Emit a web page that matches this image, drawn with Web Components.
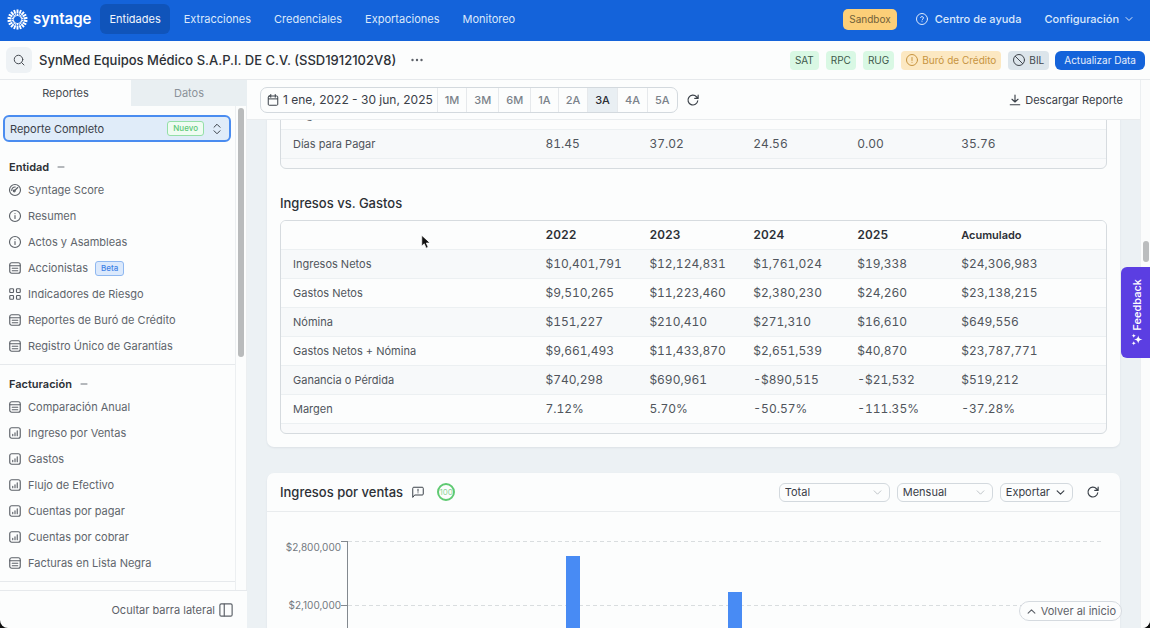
<!DOCTYPE html>
<html lang="es">
<head>
<meta charset="utf-8">
<meta name="viewport" content="width=device-width, initial-scale=1">
<title>Syntage – SynMed Equipos Médico</title>
<style>
  html, body { height: 100%; margin: 0; }
  body { background: #111; color: #464b52; font-family: Inter, "Liberation Sans", sans-serif; font-size: 11px; line-height: 16px; overflow: hidden; }
</style>
</head>
<body>
<syn-app>
  <syn-topbar slot="top"></syn-topbar>
  <syn-entity-bar slot="entity" name="SynMed Equipos Médico S.A.P.I. DE C.V. (SSD1912102V8)"></syn-entity-bar>
  <syn-sidebar slot="side">
    <syn-nav-group heading="Entidad">
      <syn-nav-item icon="gauge">Syntage Score</syn-nav-item>
      <syn-nav-item icon="info">Resumen</syn-nav-item>
      <syn-nav-item icon="info">Actos y Asambleas</syn-nav-item>
      <syn-nav-item icon="list">Accionistas<syn-tag slot="tag" tone="beta">Beta</syn-tag></syn-nav-item>
      <syn-nav-item icon="grid">Indicadores de Riesgo</syn-nav-item>
      <syn-nav-item icon="list">Reportes de Buró de Crédito</syn-nav-item>
      <syn-nav-item icon="list">Registro Único de Garantías</syn-nav-item>
    </syn-nav-group>
    <syn-nav-group heading="Facturación">
      <syn-nav-item icon="list">Comparación Anual</syn-nav-item>
      <syn-nav-item icon="chart">Ingreso por Ventas</syn-nav-item>
      <syn-nav-item icon="chart">Gastos</syn-nav-item>
      <syn-nav-item icon="chart">Flujo de Efectivo</syn-nav-item>
      <syn-nav-item icon="chart">Cuentas por pagar</syn-nav-item>
      <syn-nav-item icon="chart">Cuentas por cobrar</syn-nav-item>
      <syn-nav-item icon="list">Facturas en Lista Negra</syn-nav-item>
    </syn-nav-group>
  </syn-sidebar>
  <syn-toolbar slot="tools"></syn-toolbar>
  <syn-card>
    <div>
      <syn-table data="dias"></syn-table>
      <syn-heading>Ingresos vs. Gastos</syn-heading>
      <syn-table data="ingresos"></syn-table>
    </div>
  </syn-card>
  <syn-card flush>
    <syn-sales-header></syn-sales-header>
    <syn-sales-chart></syn-sales-chart>
  </syn-card>
</syn-app>

<script>
const base = `*,:host{box-sizing:border-box}
  button,select{font:inherit;color:inherit;margin:0;cursor:pointer}
  button{background:none;border:0;padding:0}
  a{color:inherit;text-decoration:none}`;

function define(name, css, html) {
  customElements.define(name, class extends HTMLElement {
    connectedCallback() {
      if (this.shadowRoot) return;
      const t = document.createElement('template');
      t.innerHTML = `<style>${base}${css}</style>` + (typeof html === 'function' ? html(this) : html);
      this.attachShadow({ mode: 'open' }).append(t.content.cloneNode(true));
    }
  });
}

const rays = Array.from({ length: 18 }, (_, i) => `<path d="M12 .5v4.500" transform="rotate(${i * 20} 12 12)"/><path d="M12 5.500v2.500" stroke-width="1.300" transform="rotate(${i * 20} 12 12)"/>`).join('');
const icons = {
  sun: `<g stroke-width="2.200" stroke-linecap="butt">${rays}</g>`,
  search: '<circle cx="11" cy="11" r="8.500"/><path d="m22 22-4.800-4.800"/>',
  dots: '<g fill="currentColor" stroke="none"><circle cx="3" cy="12" r="2.400"/><circle cx="12" cy="12" r="2.400"/><circle cx="21" cy="12" r="2.400"/></g>',
  help: '<circle cx="12" cy="12" r="11"/><path d="M9.1 9a3 3 0 0 1 5.8 1c0 2-2.9 2.6-2.9 4M12 17.400v.1"/>',
  down: '<path d="m3 7.500 9 9 9-9"/>',
  up: '<path d="m3 16.500 9-9 9 9"/>',
  alert: '<circle cx="12" cy="12" r="11"/><path d="M12 7v6M12 16.500v.2"/>',
  ban: '<circle cx="12" cy="12" r="11"/><path d="m4.500 4.500 15 15"/>',
  sort: '<path d="m6 8.500 6-6 6 6M6 15.500l6 6 6-6"/>',
  minus: '<path d="M3 12h18"/>',
  gauge: '<circle cx="12" cy="12" r="11"/><path d="m10.500 14 7-7M5.500 13a6.500 6.500 0 0 1 7-7"/><circle cx="10.500" cy="14" r="1.800"/>',
  info: '<circle cx="12" cy="12" r="11"/><path d="M12 11v6M12 7v.2"/>',
  list: '<rect x="1.500" y="1.500" width="21" height="21" rx="4"/><path d="M1.500 7.500h21M6.500 12.500h11M6.500 17.500h11"/>',
  grid: '<rect x="1.500" y="1.500" width="7.500" height="7.500" rx="1.500"/><rect x="15" y="1.500" width="7.500" height="7.500" rx="1.500"/><rect x="1.500" y="15" width="7.500" height="7.500" rx="1.500"/><rect x="15" y="15" width="7.500" height="7.500" rx="1.500"/>',
  chart: '<rect x="1.500" y="1.500" width="21" height="21" rx="4"/><path d="M7.500 17.500v-3M12 17.500v-6M16.500 17.500v-10"/>',
  panel: '<rect x="1.500" y="1.500" width="21" height="21" rx="2.500"/><path d="M9 2v20"/>',
  calendar: '<rect x="2.500" y="4" width="19" height="18.500" rx="2"/><path d="M3 9.800h18M7.500 1v5.500M16.500 1v5.500"/>',
  refresh: '<path d="M21.500 13.500a9.800 9.800 0 1 1-2.500-8l3 3M22.300 2v6.800H15.500"/>',
  download: '<path d="M12 2v13M6 10.500l6 5.500 6-5.500M2.500 21.500h19"/>',
  comment: '<path d="M1.500 22V4.500a2 2 0 0 1 2-2h17a2 2 0 0 1 2 2v11.500a2 2 0 0 1-2 2H6z"/><path d="M12 6.500v4M12 13.600v.2"/>',
  sparkle: '<g fill="currentColor" stroke="none"><path d="M9.500 3.500c1 6 2.500 7.500 8.500 8.500-6 1-7.500 2.500-8.500 8.500-1-6-2.500-7.500-8.500-8.500 6-1 7.500-2.500 8.500-8.500z"/><path d="M18.500 0c.5 3 1.500 4 4.500 4.500-3 .5-4 1.500-4.500 4.500-.5-3-1.500-4-4.500-4.500 3-.5 4-1.500 4.500-4.500zM18.500 15c.5 3 1.500 4 4.500 4.500-3 .5-4 1.500-4.500 4.500-.5-3-1.500-4-4.500-4.500 3-.5 4-1.500 4.500-4.500z"/></g>',
  cursor: '<path d="M3 1v18l4.300-4 3.200 7.500 3.500-1.500-3.200-7.300h6z" fill="#111" stroke="#fff" stroke-width="1.200"/>'
};
define('syn-icon', `:host{display:inline-flex;flex:none;width:12px;height:12px}svg{width:100%;height:100%;overflow:visible}`,
  el => `<svg viewBox="0 0 24 24" fill="none" stroke="currentColor" stroke-width="${el.getAttribute('weight') || 2}" stroke-linecap="round" stroke-linejoin="round" aria-hidden="true">${icons[el.getAttribute('name')]}</svg>`);

define('syn-tag', `:host{display:inline-flex;align-items:center;height:15px;padding:0 5px;border:1px solid;border-radius:3px;font-size:8px;font-weight:500;line-height:13px}
  :host([tone=beta]){color:#3f83e6;background:#dbe9fc;border-color:#8fb8f0}
  :host([tone=new]){color:#5cc878;background:#effcf2;border-color:#94dfa8}`, '<slot></slot>');

define('syn-app', `:host{display:flex;flex-direction:column;height:100vh;background:#fcfdfd;border-radius:0 0 8px 8px;overflow:hidden;position:relative}
  .body{flex:1;min-height:0;display:flex}
  .main{flex:1;min-width:0;display:flex;flex-direction:column;position:relative}
  .view{flex:1;min-height:0;overflow:hidden;background:#ecf1f4;padding:20px 20px 0}
  .stack{display:flex;flex-direction:column;gap:26px}
  .track{flex:none;width:10px;background:#fbfcfc;border-left:1px solid #eceff1;padding:161px 1px 0 2px}
  .thumb{height:21px;border-radius:3px;background:#bbbdbe}
  .top{position:absolute;right:18px;bottom:7px;height:20px;display:flex;align-items:center;gap:5px;padding:0 5px 0 7px;border:1px solid #d5dadf;border-radius:10px;background:#fcfdfd;color:#5c6168}
  .top syn-icon{width:9px;height:9px}
  .feedback{position:absolute;right:0;top:267px;width:29px;height:91px;border-radius:6px 0 0 6px;background:#5b3ee2;color:#fff;display:flex;align-items:center;justify-content:center;padding-left:3px}
  .feedback span{display:flex;align-items:center;gap:3px;writing-mode:vertical-rl;transform:rotate(180deg);font-weight:500}
  .cursor{position:absolute;left:420px;top:235px;width:14px;height:14px}`,
  `<slot name="top"></slot><slot name="entity"></slot>
  <div class="body"><slot name="side"></slot>
    <main class="main"><slot name="tools"></slot><div class="view"><div class="stack"><slot></slot></div></div>
      <button class="top"><syn-icon name="up" weight="3"></syn-icon>Volver al inicio</button></main>
    <div class="track"><div class="thumb"></div></div></div>
  <button class="feedback"><span><syn-icon name="sparkle"></syn-icon>Feedback</span></button>
  <syn-icon class="cursor" name="cursor"></syn-icon>`);

define('syn-topbar', `:host{display:flex;align-items:center;flex:none;height:41px;padding:0 17px 3px 7px;background:#1463da;color:#dbe8fb}
  .logo{display:flex;align-items:center;gap:5px;color:#fff;font-size:15px;line-height:20px;font-weight:600;margin-right:9px}
  .logo syn-icon{width:21px;height:21px}
  nav{display:flex;gap:5px;flex:1}
  nav a{padding:7px 9px;border-radius:6px}
  nav a[aria-current]{background:#1054ba;color:#f0f5fd}
  .env{padding:2px 6px;border-radius:5px;background:#fccf78;color:#70603a;font-size:10px;line-height:17px;margin-right:19px}
  .link{display:flex;align-items:center;gap:7px;font-weight:500;margin-right:23px}
  .cfg{display:flex;align-items:center;gap:6px;font-weight:500}
  .cfg syn-icon{width:8px;height:8px}`,
  `<a class="logo" href="#"><syn-icon name="sun"></syn-icon>syntage</a>
  <nav><a href="#" aria-current="page">Entidades</a><a href="#">Extracciones</a><a href="#">Credenciales</a><a href="#">Exportaciones</a><a href="#">Monitoreo</a></nav>
  <span class="env">Sandbox</span>
  <a class="link" href="#"><syn-icon name="help"></syn-icon>Centro de ayuda</a>
  <button class="cfg">Configuración<syn-icon name="down" weight="3"></syn-icon></button>`);

define('syn-entity-bar', `:host{display:flex;align-items:center;flex:none;height:39px;padding:0 5px 0 6px;border-bottom:1px solid #e6e9ec}
  .search{display:flex;align-items:center;justify-content:center;width:26px;height:26px;border-radius:6px;background:#eef2f5;margin-right:7px}
  h1{margin:0;font-size:13px;line-height:18px;font-weight:500;color:#2c3036}
  .more{display:flex;margin-left:15px;color:#5c6168}
  .src{display:flex;gap:7px;margin-left:auto;margin-right:6px;font-size:10px}
  .src span{display:flex;align-items:center;gap:4px;height:19px;padding:0 5px;border-radius:4px}
  .ok{background:#d9f8e4;color:#40594b}.warn{background:#fce8c2;color:#c79440}.off{background:#dce5eb;color:#41474e}
  .go{height:19px;padding:0 9px;border-radius:6px;background:#1463da;color:#e4eefc;font-size:10px}`,
  el => `<button class="search" aria-label="Buscar"><syn-icon name="search"></syn-icon></button>
  <h1>${el.getAttribute('name')}</h1><button class="more" aria-label="Más opciones"><syn-icon name="dots"></syn-icon></button>
  <div class="src"><span class="ok">SAT</span><span class="ok">RPC</span><span class="ok">RUG</span><span class="warn"><syn-icon name="alert"></syn-icon>Buró de Crédito</span><span class="off"><syn-icon name="ban"></syn-icon>BIL</span></div>
  <button class="go">Actualizar Data</button>`);

define('syn-sidebar', `:host{display:flex;flex-direction:column;flex:none;width:247px;min-height:0}
  .tabs{display:flex;flex:none;height:26px}
  .tabs button{flex:131;color:#464b52}.tabs button+button{flex:116;background:#e9eff2;color:#8b9299}
  .scroll{flex:1;min-height:0;display:flex}
  .list{flex:1;min-width:0;overflow:hidden}
  .picker{display:flex;align-items:center;width:calc(100% - 7px);height:27px;margin:9px 4px 12px 3px;padding:0 6px 0 5px;border:2px solid #4a8cf0;border-radius:6px;background:#e0ecf9;color:#3a4048}
  .picker syn-tag{margin-left:auto;margin-right:7px}
  .track{flex:none;width:12px;border-left:1px solid #eceff1;border-right:1px solid #eceff1;padding:2px 2px}
  .thumb{height:249px;width:6px;border-radius:3px;background:#b9bbbc}
  footer{display:flex;flex:none;height:38px;border-top:1px solid #e6e9ec;padding-right:14px;justify-content:flex-end}
  footer button{display:flex;align-items:center;gap:4px;color:#5c6168}
  footer syn-icon{width:14px;height:14px}`,
  `<div class="tabs" role="tablist"><button role="tab" aria-selected="true">Reportes</button><button role="tab" aria-selected="false">Datos</button></div>
  <div class="scroll"><nav class="list"><button class="picker">Reporte Completo<syn-tag tone="new">Nuevo</syn-tag><syn-icon name="sort"></syn-icon></button><slot></slot></nav>
  <div class="track"><div class="thumb"></div></div></div>
  <footer><button>Ocultar barra lateral<syn-icon name="panel"></syn-icon></button></footer>`);

define('syn-nav-group', `:host{display:block;padding:3px 9px 5px;border-bottom:1px solid #e6e9ec;margin-bottom:6px}
  h2{margin:0;display:flex;align-items:center;gap:8px;height:20px;font-size:11px;font-weight:600;line-height:20px;color:#2c3036}
  h2 syn-icon{width:8px;height:8px;color:#6d737a}`,
  el => `<h2>${el.getAttribute('heading')}<syn-icon name="minus" weight="3"></syn-icon></h2><slot></slot>`);

define('syn-nav-item', `:host{display:block}
  a{display:flex;align-items:center;gap:7px;height:26px;color:#60656c}
  syn-icon{color:#5c6168}`,
  el => `<a href="#"><syn-icon name="${el.getAttribute('icon')}" weight="2.300"></syn-icon><span><slot></slot></span><slot name="tag"></slot></a>`);

define('syn-toolbar', `:host{display:flex;align-items:center;flex:none;height:40px;padding:0 17px 0 13px;border-bottom:1px solid #e9ecee;background:#fcfdfd}
  .range{display:flex;height:26px;border:1px solid #d3d9de;border-radius:7px;overflow:hidden;color:#7b828a}
  .range button{padding:0 7px;border-left:1px solid #e6e9ec;font-weight:500}
  .range .date{display:flex;align-items:center;gap:4px;padding:0 4px 0 6px;border:0;color:#3a4048;font-size:12px;font-weight:400}
  .range [aria-pressed=true]{background:#e9eff3;color:#2c3036}
  .icon{display:flex;margin-left:9px;color:#3a4048}
  .dl{display:flex;align-items:center;gap:4px;margin-left:auto;color:#3a4048}`,
  () => `<div class="range"><button class="date"><syn-icon name="calendar"></syn-icon>1 ene, 2022 - 30 jun, 2025</button>${['1M', '3M', '6M', '1A', '2A', '3A', '4A', '5A'].map(p => `<button aria-pressed="${p === '3A'}">${p}</button>`).join('')}</div>
  <button class="icon" aria-label="Recargar"><syn-icon name="refresh" weight="2.300"></syn-icon></button>
  <button class="dl"><syn-icon name="download" weight="2.300"></syn-icon>Descargar Reporte</button>`);

define('syn-card', `:host{display:block;padding:13px;border-radius:7px;background:#fcfdfd;box-shadow:0 1px 2px #1c2b3a14}
  :host([flush]){padding:0}`, '<slot></slot>');

define('syn-heading', `:host{display:block;margin:24px 0 7px}h2{margin:0;font-size:13px;font-weight:500;line-height:20px;color:#2c3036}`, '<h2><slot></slot></h2>');

const tables = {
  dias: { shade: 1, rows: [['Pagos', '', '', '', '', ''], ['Días para Pagar', '81.45', '37.02', '24.56', '0.00', '35.76']] },
  ingresos: {
    shade: 0, head: ['', '2022', '2023', '2024', '2025', 'Acumulado'],
    rows: [
      ['Ingresos Netos', '$10,401,791', '$12,124,831', '$1,761,024', '$19,338', '$24,306,983'],
      ['Gastos Netos', '$9,510,265', '$11,223,460', '$2,380,230', '$24,260', '$23,138,215'],
      ['Nómina', '$151,227', '$210,410', '$271,310', '$16,610', '$649,556'],
      ['Gastos Netos + Nómina', '$9,661,493', '$11,433,870', '$2,651,539', '$40,870', '$23,787,771'],
      ['Ganancia o Pérdida', '$740,298', '$690,961', '-$890,515', '-$21,532', '$519,212'],
      ['Margen', '7.12%', '5.70%', '-50.57%', '-111.35%', '-37.28%']
    ]
  }
};
define('syn-table', `:host{display:block;border:1px solid #d6dbdf;border-radius:6px;overflow:hidden;padding-bottom:9px;background:#f9fafb}
  table{width:100%;table-layout:fixed;border-collapse:separate;border-spacing:0;background:#fcfdfd}
  col:first-child{width:30.6%}col.y{width:12.6%}
  th,td{height:29px;padding:0 12px;text-align:left;font-weight:400;border-bottom:1px solid #ecf0f2;white-space:nowrap;color:#50555c}
  thead th{color:#2c3036;font-weight:600}
  td,thead th:not(:last-child){font-size:12px;font-variant-numeric:tabular-nums}
  tr.shade>*{background:#f7f9fa}`,
  el => {
    const t = tables[el.getAttribute('data')];
    const head = t.head ? `<thead><tr>${t.head.map(h => h ? `<th scope="col">${h}</th>` : '<td></td>').join('')}</tr></thead>` : '';
    return `<table><colgroup><col>${'<col class="y">'.repeat(4)}<col></colgroup>${head}<tbody>${t.rows.map((r, i) =>
      `<tr class="${i % 2 === t.shade ? 'shade' : ''}">${r.map((c, j) => j ? `<td>${c}</td>` : `<th scope="row">${c}</th>`).join('')}</tr>`).join('')}</tbody></table>`;
  });

define('syn-sales-header', `:host{display:flex;align-items:center;height:39px;padding:0 21px 0 13px;border-bottom:1px solid #e9ecee;color:#3a4048}
  h2{margin:0;font-size:13px;font-weight:500;line-height:20px;color:#2c3036}
  .note{display:flex;margin:0 13px 0 9px}
  .score{display:flex;align-items:center;justify-content:center;width:18px;height:18px;border:2px solid #5fca72;border-radius:9px;font-size:8px;line-height:10px;color:#8fd69b}
  .tools{display:flex;align-items:center;gap:7px;margin-left:auto}
  .pick{display:grid;align-items:center}
  .pick>*{grid-area:1/1}
  .pick syn-icon{width:9px;height:9px;justify-self:end;margin-right:8px;color:#a3aab0;pointer-events:none}
  select,.export{height:19px;border:1px solid #d3d9de;border-radius:6px;background:#fcfdfd;line-height:16px}
  select{appearance:none;width:96px;padding:0 5px}
  select.wide{width:111px}
  .export{display:flex;align-items:center;gap:6px;padding:0 7px 0 5px}
  .export syn-icon{width:9px;height:9px}
  .reload{display:flex;margin-left:7px}`,
  `<h2>Ingresos por ventas</h2><button class="note" aria-label="Comentarios"><syn-icon name="comment"></syn-icon></button><span class="score">100</span>
  <div class="tools"><div class="pick"><select class="wide" aria-label="Tipo"><option>Total</option></select><syn-icon name="down" weight="1.800"></syn-icon></div>
  <div class="pick"><select aria-label="Periodo"><option>Mensual</option></select><syn-icon name="down" weight="1.800"></syn-icon></div>
  <button class="export">Exportar<syn-icon name="down" weight="3"></syn-icon></button>
  <button class="reload" aria-label="Recargar"><syn-icon name="refresh" weight="2.300"></syn-icon></button></div>`);

/* Monthly totals, in thousands, from January 2022 to June 2025 */
const months = Array(42).fill(600);
months[12] = 2645;
months[21] = 2250;
define('syn-sales-chart', `:host{display:grid;grid-template-columns:74px 6px 1fr;padding:29px 16px 20px 0;color:#737980;font-size:10px;line-height:12px}
  .labels{display:flex;flex-direction:column;gap:46px;text-align:right}
  .ticks div{height:64px;border-top:1px solid #83898f}
  .plot{display:grid;grid-template-columns:repeat(42,1fr);align-items:end;justify-items:center;height:257px;border-left:1px solid #83898f;
    background:repeating-linear-gradient(90deg,transparent 0 4px,#fcfdfd 4px 7px),repeating-linear-gradient(#d9dddf 0 1px,transparent 1px 64px)}
  .bar{width:14px;background:#488bf4}`,
  () => `<div class="labels"><span>$2,800,000</span><span>$2,100,000</span></div>
  <div class="ticks"><div></div><div></div><div></div><div></div></div>
  <div class="plot">${months.map(v => `<div class="bar" style="height:${Math.round(v * 256 / 2800)}px"></div>`).join('')}</div>`);

/* Open the report scrolled to the comparison table */
document.querySelector('syn-app').shadowRoot.querySelector('.view').scrollTop = 53;
</script>
</body>
</html>
